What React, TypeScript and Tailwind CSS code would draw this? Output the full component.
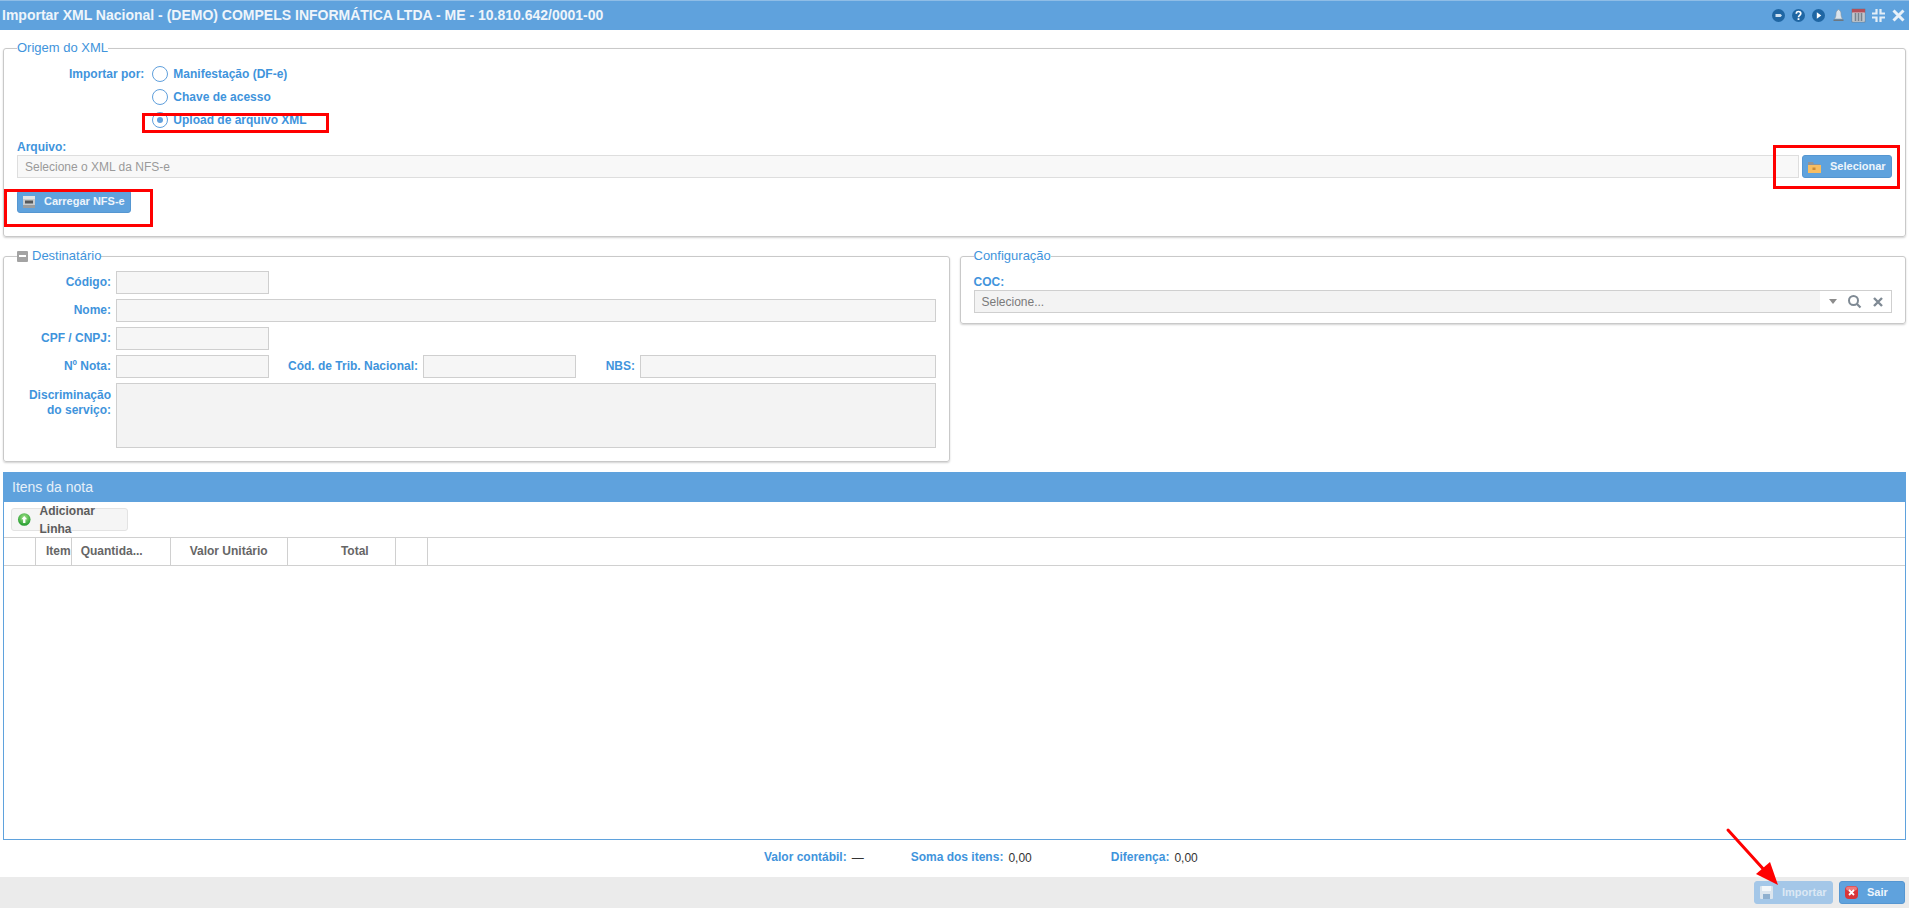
const labelCls = "text-[12px] font-bold text-[#3f94dc] leading-[15px]";
const inputCls = "h-[23px] border border-[#cfcfcf] bg-[#f6f6f6]";

const HeaderIcons = () => (
  <div className="flex items-center gap-[5px]">
    <svg width="15" height="15" viewBox="0 0 15 15">
      <circle cx="7.5" cy="7.5" r="6.5" fill="#1f66a3" />
      <path d="M4.5 6h5l1.500 1.500-1.500 1.500h-5z" fill="#cfe2f2" />
    </svg>
    <svg width="15" height="15" viewBox="0 0 15 15">
      <circle cx="7.500" cy="7.500" r="6.500" fill="#1f66a3" />
      <path d="M5.300 5.800c0-3 4.500-3 4.500-.2 0 1.800-2.300 1.700-2.300 3.600" fill="none" stroke="#fff" strokeWidth="1.700" />
      <rect x="6.600" y="10.200" width="1.800" height="1.800" fill="#fff" />
    </svg>
    <svg width="15" height="15" viewBox="0 0 15 15">
      <circle cx="7.500" cy="7.500" r="6.500" fill="#1f66a3" />
      <path d="M5.800 4.300l4.500 3.200-4.500 3.200z" fill="#fff" />
    </svg>
    <svg width="15" height="15" viewBox="0 0 15 15">
      <path d="M7.500 1.500c1 0 1 1 1 1 1.500.6 1.500 2.500 1.500 4 0 2 1 3.500 1.500 4.500h-8c.5-1 1.500-2.500 1.500-4.500 0-1.500 0-3.400 1.500-4 0 0 0-1 1-1z" fill="#dbe4ec" stroke="#8a97a3" strokeWidth=".6" />
      <rect x="2.500" y="11.500" width="10" height="1.500" fill="#6d7780" />
    </svg>
    <svg width="15" height="15" viewBox="0 0 15 15">
      <rect x="1" y="1" width="13" height="13" fill="#d5dbe1" stroke="#6c7680" strokeWidth=".6" />
      <rect x="1" y="1" width="13" height="3.500" fill="#b4505a" />
      <path d="M2.500 6h10M2.500 8h10M2.500 10h10M2.500 12h10M4.500 5v8M7.500 5v8M10.500 5v8" stroke="#6c7680" strokeWidth=".8" />
    </svg>
    <svg width="15" height="15" viewBox="0 0 15 15">
      <path d="M5.500 1v4.500H1M9.500 1v4.500H14M5.500 14V9.500H1M9.500 14V9.500H14" fill="none" stroke="#e4eef7" strokeWidth="2.200" />
    </svg>
    <svg width="15" height="15" viewBox="0 0 15 15">
      <path d="M2.500 2.500l10 10M12.500 2.500l-10 10" stroke="#e8f1f9" strokeWidth="3" />
    </svg>
  </div>
);

const Radio = ({ label, checked }: { label: string; checked?: boolean }) => (
  <div className="flex items-center gap-[5px]">
    <span className="flex h-[16px] w-[16px] items-center justify-center rounded-full border-[1.5px] border-[#5f9fdc] bg-white">
      {checked && <span className="h-[6px] w-[6px] rounded-full bg-[#5f9fdc]" />}
    </span>
    <span className={labelCls}>{label}</span>
  </div>
);

const BlueButton = ({
  icon,
  label,
  muted,
  className,
}: {
  icon: React.ReactNode;
  label: string;
  muted?: boolean;
  className: string;
}) => (
  <div
    className={`flex h-[23px] items-center rounded-[3px] border pl-[4px] text-[11px] font-bold ${
      muted ? "border-[#a4c7e8] bg-[#a4c7e8] text-[#dbe8f4]" : "border-[#5596d1] bg-[#5fa2dd] text-[#eef5fb]"
    } ${className}`}
  >
    {icon}
    <span className="ml-[8px]">{label}</span>
  </div>
);

const XmlIcon = () => (
  <svg width="14" height="14" viewBox="0 0 14 14">
    <rect x="1" y="1" width="12" height="12" fill="#c9ccce" />
    <rect x="1" y="1" width="12" height="3" fill="#e3e5e6" />
    <rect x="1" y="10" width="12" height="3" fill="#9a9d9f" />
    <rect x="3" y="5.500" width="8" height="3" fill="#55585a" />
  </svg>
);

const FolderIcon = () => (
  <svg width="15" height="14" viewBox="0 0 15 14">
    <path d="M1 2h5l1 2h6v2H1z" fill="#8f9499" />
    <rect x="1" y="5" width="13" height="8" fill="#f7bd62" />
    <rect x="5.500" y="7.500" width="3" height="2.500" fill="#c98a35" />
  </svg>
);

const SaveIcon = () => (
  <svg width="15" height="15" viewBox="0 0 15 15">
    <rect x="1" y="1" width="13" height="13" rx="1" fill="#dbe5ee" />
    <rect x="3" y="1" width="9" height="5" fill="#f4f7fa" />
    <rect x="4" y="9" width="7" height="5" fill="#8fb0cf" />
  </svg>
);

const ExitIcon = () => (
  <svg width="15" height="15" viewBox="0 0 15 15">
    <rect x="1" y="1" width="13" height="13" rx="4" fill="#d8353a" />
    <rect x="2" y="1.500" width="11" height="4" rx="2" fill="#ee7a7c" />
    <path d="M5 5l5 5M10 5l-5 5" stroke="#fff" strokeWidth="1.800" />
  </svg>
);

const AddIcon = () => (
  <svg width="15" height="15" viewBox="0 0 15 15">
    <defs>
      <radialGradient id="addBall" cx="50%" cy="35%" r="65%">
        <stop offset="0%" stopColor="#a5e58a" />
        <stop offset="100%" stopColor="#1f9a2c" />
      </radialGradient>
    </defs>
    <circle cx="7.500" cy="7.500" r="6.500" fill="url(#addBall)" />
    <path d="M7.500 4l3 3.200H8.700V11H6.300V7.200H4.500z" fill="#fff" />
  </svg>
);

const Panel = ({
  legend,
  className,
  children,
}: {
  legend: React.ReactNode;
  className?: string;
  children: React.ReactNode;
}) => (
  <fieldset className={`min-w-0 rounded-[3px] border border-[#c9c9c9] px-[13px] shadow-[0_1px_2px_rgba(0,0,0,0.18)] ${className ?? ""}`}>
    <legend className="text-[13px] leading-[16px] text-[#3f94dc]">{legend}</legend>
    {children}
  </fieldset>
);

const FormLabel = ({ children, className }: { children: React.ReactNode; className?: string }) => (
  <span className={`${labelCls} text-right ${className ?? "w-[94px] shrink-0"}`}>{children}</span>
);

const columns = [
  { label: "", cls: "w-[32px]" },
  { label: "Item", cls: "flex-1 pl-[10px]" },
  { label: "Quantida...", cls: "w-[99px] pl-[9px]" },
  { label: "Valor Unitário", cls: "w-[117px] text-center" },
  { label: "Total", cls: "w-[108px] text-right pr-[26px]" },
  { label: "", cls: "w-[32px]" },
];

const App = () => {
  return (
    <div className="relative flex h-[908px] w-full flex-col overflow-hidden bg-white font-['Liberation_Sans',Arial,sans-serif]">
      <header className="flex h-[30px] shrink-0 items-center justify-between border-t border-[#8fbde6] bg-[#5fa2dd] pl-[2px] pr-[3px]">
        <h1 className="text-[14px] font-bold text-[#eef5fb]">
          Importar XML Nacional - (DEMO) COMPELS INFORMÁTICA LTDA - ME - 10.810.642/0001-00
        </h1>
        <HeaderIcons />
      </header>

      <main className="flex min-h-0 flex-1 flex-col px-[3px] pt-[10px]">
        <Panel legend="Origem do XML" className="h-[197px]">
          <div className="flex pl-[52px] pt-[7px]">
            <span className={`${labelCls} mr-[8px] mt-[4px]`}>Importar por:</span>
            <div className="flex flex-col gap-[7px] pt-[3px]">
              <Radio label="Manifestação (DF-e)" />
              <Radio label="Chave de acesso" />
              <Radio label="Upload de arquivo XML" checked />
            </div>
          </div>
          <div className={`${labelCls} mt-[12px]`}>Arquivo:</div>
          <div className="flex gap-[3px]">
            <div className="flex h-[23px] flex-1 items-center border border-[#dedede] bg-[#f8f8f8] pl-[7px] text-[12px] text-[#9a9a9a]">
              Selecione o XML da NFS-e
            </div>
            <BlueButton icon={<FolderIcon />} label="Selecionar" className="w-[90px]" />
          </div>
          <BlueButton icon={<XmlIcon />} label="Carregar NFS-e" className="mt-[12px] w-[114px]" />
        </Panel>

        <div className="mt-[11px] grid grid-cols-2 items-start gap-[10px]">
          <Panel
            className="h-[214px]"
            legend={
              <span className="flex items-center gap-[4px]">
                <span className="flex h-[11px] w-[11px] items-center justify-center rounded-[1px] bg-[#a3a3a3]">
                  <span className="h-[2px] w-[7px] bg-white" />
                </span>
                Destinatário
              </span>
            }
          >
            <div className="flex flex-col gap-[5px] pt-[7px]">
              <div className="flex items-center gap-[5px]">
                <FormLabel>Código:</FormLabel>
                <div className={`${inputCls} w-[153px]`} />
              </div>
              <div className="flex items-center gap-[5px]">
                <FormLabel>Nome:</FormLabel>
                <div className={`${inputCls} flex-1`} />
              </div>
              <div className="flex items-center gap-[5px]">
                <FormLabel>CPF / CNPJ:</FormLabel>
                <div className={`${inputCls} w-[153px]`} />
              </div>
              <div className="flex items-center gap-[5px]">
                <FormLabel>Nº Nota:</FormLabel>
                <div className={`${inputCls} w-[153px]`} />
                <FormLabel className="w-[144px] shrink-0">Cód. de Trib. Nacional:</FormLabel>
                <div className={`${inputCls} w-[153px]`} />
                <FormLabel className="w-[54px] shrink-0">NBS:</FormLabel>
                <div className={`${inputCls} flex-1`} />
              </div>
              <div className="flex items-start gap-[5px]">
                <FormLabel className="w-[94px] shrink-0 pt-[5px]">
                  Discriminação
                  <br />
                  do serviço:
                </FormLabel>
                <div className="h-[65px] flex-1 border border-[#cfcfcf] bg-[#f3f3f3]" />
              </div>
            </div>
          </Panel>

          <Panel legend="Configuração" className="h-[76px]">
            <div className={`${labelCls} mt-[11px]`}>COC:</div>
            <div className="flex h-[23px] items-center border border-[#cfcfcf] bg-[#f3f3f3]">
              <span className="flex-1 pl-[7px] text-[12px] text-[#7a7a7a]">Selecione...</span>
              <div className="flex h-full w-[71px] items-center gap-[10px] bg-white pl-[9px]">
                <span className="h-0 w-0 border-x-[4px] border-t-[5px] border-x-transparent border-t-[#8c8c8c]" />
                <svg width="15" height="15" viewBox="0 0 15 15">
                  <circle cx="6.500" cy="6.500" r="4.500" fill="none" stroke="#7f8a94" strokeWidth="2" />
                  <path d="M10 10l3.500 3.500" stroke="#7f8a94" strokeWidth="2.200" />
                </svg>
                <svg width="12" height="12" viewBox="0 0 12 12">
                  <path d="M2 2l8 8M10 2l-8 8" stroke="#7f8a94" strokeWidth="2.400" />
                </svg>
              </div>
            </div>
          </Panel>
        </div>

        <section className="mt-[10px] flex min-h-0 flex-1 flex-col border border-t-0 border-[#5fa2dd]">
          <div className="flex h-[30px] shrink-0 items-center bg-[#5fa2dd] pl-[8px] text-[14px] text-[#e6f0f9]">
            Itens da nota
          </div>
          <div className="flex h-[35px] shrink-0 items-center pl-[7px]">
            <div className="flex h-[23px] w-[117px] items-center gap-[8px] rounded-[3px] border border-[#e3e3e3] bg-[#f5f5f5] pl-[5px] text-[12px] font-bold text-[#5c5c5c]">
              <AddIcon />
              Adicionar Linha
            </div>
          </div>
          <div className="flex h-[29px] shrink-0 border-y border-[#d0d0d0]">
            {columns.map((col, idx) => (
              <div
                key={idx}
                className={`flex-none leading-[26px] text-[12px] font-bold text-[#666] border-r border-[#d0d0d0] ${col.cls}`}
              >
                {col.label}
              </div>
            ))}
          </div>
          <div className="flex-1" />
        </section>

        <div className="flex h-[37px] shrink-0 items-center pl-[761px] pb-[2px] text-[12px] text-[#333]">
          <span className={labelCls}>Valor contábil:</span>
          <span className="ml-[5px]">—</span>
          <span className={`${labelCls} ml-[47px]`}>Soma dos itens:</span>
          <span className="ml-[5px]">0,00</span>
          <span className={`${labelCls} ml-[79px]`}>Diferença:</span>
          <span className="ml-[5px]">0,00</span>
        </div>
      </main>

      <footer className="flex h-[31px] shrink-0 items-center justify-end gap-[6px] bg-[#ebebeb] pr-[4px]">
        <BlueButton muted icon={<SaveIcon />} label="Importar" className="w-[79px]" />
        <BlueButton icon={<ExitIcon />} label="Sair" className="w-[66px]" />
      </footer>

      {/* red annotations drawn over the screenshot */}
      <div className="absolute left-[142px] top-[113px] h-[20px] w-[187px] border-[3px] border-[#ff0000]" />
      <div className="absolute left-[1773px] top-[145px] h-[44px] w-[127px] border-[3px] border-[#ff0000]" />
      <div className="absolute left-[4px] top-[189px] h-[38px] w-[149px] border-[3px] border-[#ff0000]" />
      <svg className="absolute left-[1720px] top-[822px]" width="70" height="70" viewBox="0 0 70 70">
        <path d="M8 8L46 50" stroke="#ff0000" strokeWidth="3" strokeLinecap="round" />
        <path d="M58 63L36 52 50 40z" fill="#ff0000" />
      </svg>
    </div>
  );
};

export default App;
